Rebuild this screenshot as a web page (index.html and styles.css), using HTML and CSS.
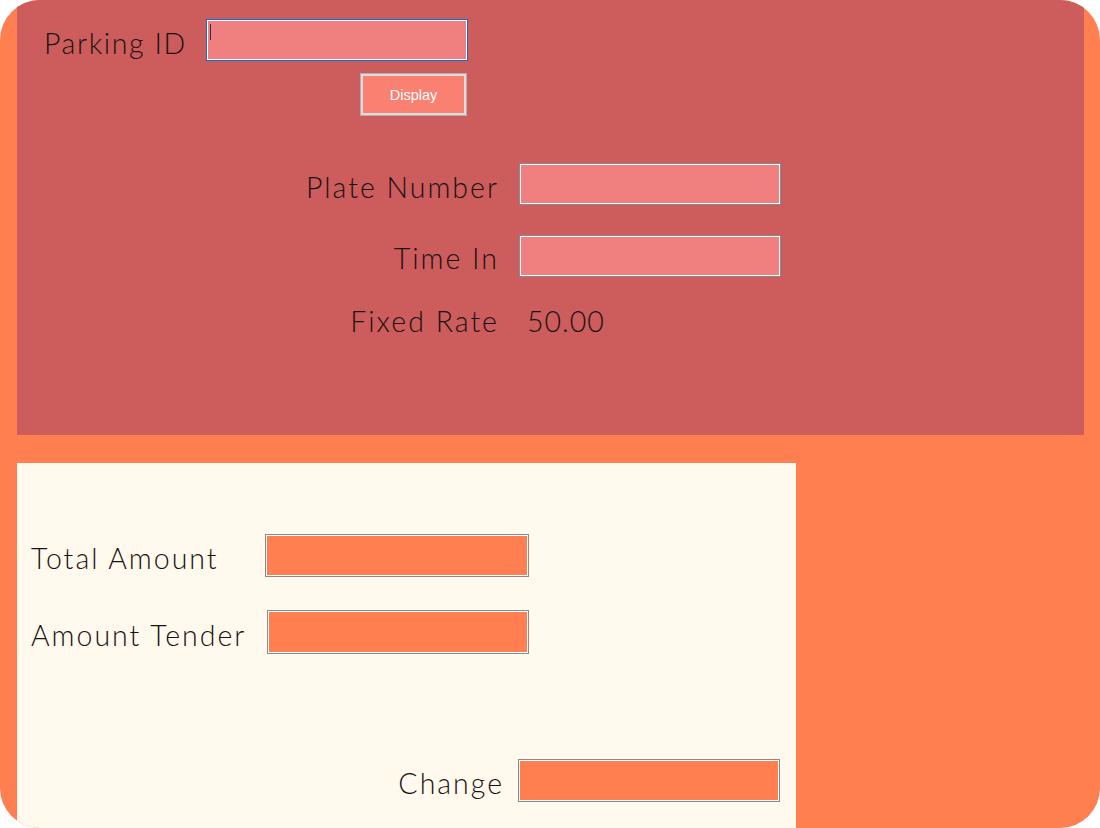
FILE: index.html
```html
<!DOCTYPE html>
<html>
<head>
<meta charset="utf-8">
<link rel="stylesheet" href="styles.css">
</head>
<body>
<div class="window">
  <div class="top">
    <div class="id-row">
      <span class="label id-label">Parking ID</span>
      <div class="field field-red focused"><span class="caret"></span></div>
    </div>
    <div class="btn-row">
      <button class="display-btn">Display</button>
    </div>
    <div class="info-grid">
      <span class="label r">Plate Number</span>
      <div class="field field-red"></div>
      <span class="label r">Time In</span>
      <div class="field field-red"></div>
      <span class="label r rate">Fixed Rate</span>
      <span class="label value">50.00</span>
    </div>
  </div>
  <div class="bottom">
    <div class="pay-row row1">
      <span class="label pay-label">Total Amount</span>
      <div class="field field-orange w264"></div>
    </div>
    <div class="pay-row row2">
      <span class="label pay-label2">Amount Tender</span>
      <div class="field field-orange w262"></div>
    </div>
    <div class="change-row">
      <span class="label r change-label">Change</span>
      <div class="field field-orange w262"></div>
    </div>
  </div>
</div>
</body>
</html>
```

FILE: styles.css
```css
html, body {
  margin: 0;
  padding: 0;
  background: #ffffff;
}
.window {
  width: 1100px;
  height: 828px;
  background: #ff7f50;
  border-radius: 40px;
  overflow: hidden;
  display: flex;
  flex-direction: column;
  font-family: "Lato", "Noto Sans", sans-serif;
  color: #1a1212;
}
.top {
  margin-left: 17px;
  width: 1067px;
  height: 435px;
  background: #cd5c5c;
  box-sizing: border-box;
  padding-top: 19px;
  display: flex;
  flex-direction: column;
}
.label {
  font-size: 28.5px;
  font-weight: 300;
  line-height: 28px;
  padding-top: 5px;
  letter-spacing: 2px;
  white-space: nowrap;
}
.r { text-align: right; margin-right: -2px; }
.id-row {
  display: flex;
  align-items: center;
  padding-left: 27px;
}
.id-label {
  width: 162px;
  letter-spacing: 1.6px;
}
.field {
  box-sizing: border-box;
  height: 42px;
  width: 262px;
  border: 1px solid #8a8a8a;
  box-shadow: inset 0 0 0 1px #ffffff;
  position: relative;
}
.field-red { background: #f08080; }
.field-orange { background: #ff7f50; }
.focused {
  border-color: #0a6fd0;
}
.caret {
  position: absolute;
  left: 3px;
  top: 4px;
  width: 1px;
  height: 16px;
  background: #1a3a5a;
}
.btn-row {
  margin-top: 12px;
  padding-left: 343px;
  display: flex;
}
.display-btn {
  width: 107px;
  height: 43px;
  box-sizing: border-box;
  background: #fa8072;
  border: 3px solid #dcdcdc;
  outline: 1px solid #b0b0b0;
  outline-offset: -1px;
  color: #ffffff;
  font-family: "Liberation Sans", Arial, sans-serif;
  font-size: 14.5px;
  padding: 0;
  margin: 0;
}
.info-grid {
  margin-top: 47px;
  display: grid;
  grid-template-columns: 480px 262px;
  column-gap: 22px;
  grid-template-rows: 42px 41px 34px;
  row-gap: 30px;
  align-items: center;
}
.info-grid .rate { margin-top: -10px; }
.info-grid .value { margin-top: -10px; margin-left: 8px; letter-spacing: 1px; }
.bottom {
  margin-top: 28px;
  margin-left: 17px;
  width: 779px;
  height: 365px;
  background: #fff9ee;
  display: flex;
  flex-direction: column;
  box-sizing: border-box;
  padding-top: 71px;
}
.pay-row {
  display: flex;
  align-items: center;
  padding-left: 14px;
}
.pay-label { width: 234px; }
.pay-label2 { width: 236px; }
.w264 { width: 264px; height: 43px; }
.w262 { width: 262px; height: 44px; }
.row2 { margin-top: 33px; }
.change-row {
  margin-top: 105px;
  display: flex;
  align-items: center;
}
.change-label {
  width: 487px;
  margin-right: 14px;
}
.change-row .field { height: 43px; }
```
